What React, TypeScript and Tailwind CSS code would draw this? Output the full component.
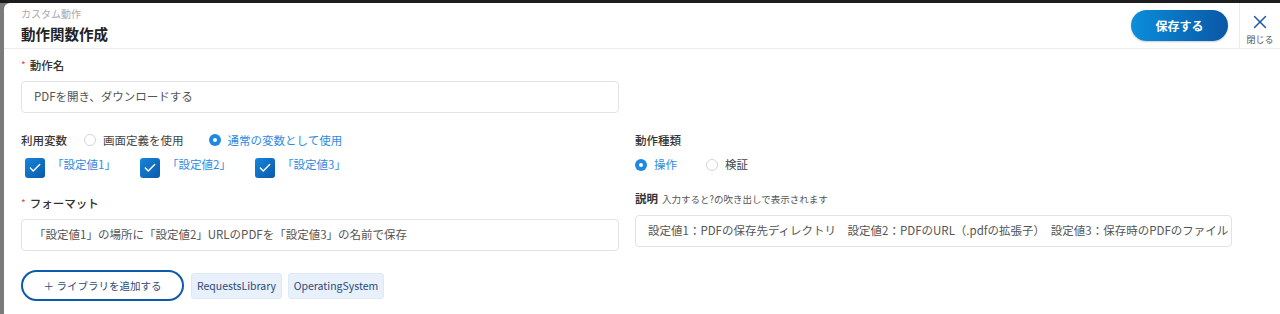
import { X, Check } from 'lucide-react';

const font = { fontFamily: '"Noto Sans CJK JP", "Noto Sans", sans-serif' };

function Radio({ label, checked }: { label: string; checked?: boolean }) {
  return (
    <label className="flex items-center gap-[7px]">
      {checked ? (
        <span className="flex h-[12px] w-[12px] items-center justify-center rounded-full bg-[#1e88e5]">
          <span className="h-[4px] w-[4px] rounded-full bg-white" />
        </span>
      ) : (
        <span className="h-[12px] w-[12px] rounded-full border border-[#d4d4dc] bg-white" />
      )}
      <span className={checked ? 'text-[#2f8ae2]' : 'text-[#444]'}>{label}</span>
    </label>
  );
}

function CheckItem({ label }: { label: string }) {
  return (
    <div className="flex w-[115px] items-center gap-[7px]">
      <span className="flex h-[20px] w-[20px] items-center justify-center rounded-[3px] bg-gradient-to-br from-[#1686dc] to-[#0a5aa9]">
        <Check size={14} strokeWidth={2.5} className="text-white" />
      </span>
      <span className="-mt-[6px] text-[#2f8ae2]">{label}</span>
    </div>
  );
}

function Label({ text, required }: { text: string; required?: boolean }) {
  return (
    <div className="flex h-[16px] items-center text-[11.5px] leading-[16px] text-[#333]">
      {required ? <span className="mr-[4px] text-[10px] text-[#e04848]">*</span> : null}
      <span className="font-medium">{text}</span>
    </div>
  );
}

function Field({ value }: { value: string }) {
  return (
    <div className="flex h-[32px] items-center overflow-hidden whitespace-nowrap rounded-[4px] border border-[#e2e2ea] bg-white px-[12px] text-[11.5px] text-[#555]">
      {value}
    </div>
  );
}

export default function App() {
  return (
    <div className="h-[314px] w-[1280px] overflow-hidden border-t-[3px] border-[#1d1d1f] bg-[#7a7a7a]" style={font}>
      <div className="ml-[4px] h-[311px] rounded-tl-[6px] bg-white">
        <header className="flex h-[46px] border-b border-[#ebebf1]">
          <div className="flex-1 pl-[17px] pt-[5px]">
            <p className="text-[10px] leading-[12px] text-[#a8a8b0]">カスタム動作</p>
            <h1 className="mt-[4px] text-[14.5px] font-bold leading-[20px] text-[#222]">動作関数作成</h1>
          </div>
          <div className="flex items-center pr-[11px]">
            <button
              type="button"
              className="h-[31px] w-[97px] rounded-full bg-gradient-to-r from-[#0c8edb] to-[#0a57a6] text-[12px] font-bold text-white shadow-[0_1px_2px_rgba(0,0,0,0.2)]"
            >
              保存する
            </button>
          </div>
          <div className="flex w-[41px] flex-col items-center border-l border-[#ebebf1] pt-[8px]">
            <X size={22} strokeWidth={1.6} className="text-[#1b5aa5]" />
            <span className="mt-[2px] text-[9px] leading-[10px] text-[#555]">閉じる</span>
          </div>
        </header>

        <div className="pl-[17px] pt-[8px] text-[11.5px]">
          <div className="w-[598px]">
            <Label text="動作名" required />
            <div className="mt-[8px]">
              <Field value="PDFを開き、ダウンロードする" />
            </div>
          </div>

          <div className="mt-[19px] flex gap-[16px]">
            <div className="w-[598px]">
              <div className="flex h-[16px] items-center leading-[16px]">
                <span className="mr-[17px] font-medium text-[#333]">利用変数</span>
                <div className="flex items-center gap-[25px]">
                  <Radio label="画面定義を使用" />
                  <Radio label="通常の変数として使用" checked />
                </div>
              </div>
              <div className="ml-[4px] mt-[9px] flex h-[22px] items-center">
                <CheckItem label="「設定値1」" />
                <CheckItem label="「設定値2」" />
                <CheckItem label="「設定値3」" />
              </div>
              <div className="mt-[16px]">
                <Label text="フォーマット" required />
              </div>
              <div className="mt-[8px]">
                <Field value="「設定値1」の場所に「設定値2」URLのPDFを「設定値3」の名前で保存" />
              </div>
              <div className="mt-[19px] flex items-center gap-[6px]">
                <button
                  type="button"
                  className="mr-[1px] h-[31px] w-[163px] rounded-full border-2 border-[#0c5aab] text-[10.5px] text-[#2d4b78]"
                >
                  ＋ ライブラリを追加する
                </button>
                <span className="flex h-[26px] w-[91px] items-center justify-center rounded-[3px] border border-[#dde9f7] bg-[#e7f0fb] text-[10.5px] text-[#2d4b78]">
                  RequestsLibrary
                </span>
                <span className="flex h-[26px] w-[96px] items-center justify-center rounded-[3px] border border-[#dde9f7] bg-[#e7f0fb] text-[10.5px] text-[#2d4b78]">
                  OperatingSystem
                </span>
              </div>
            </div>

            <div className="w-[597px]">
              <Label text="動作種類" />
              <div className="mt-[9px] flex h-[16px] items-center gap-[29px]">
                <Radio label="操作" checked />
                <Radio label="検証" />
              </div>
              <div className="mt-[18px] flex h-[16px] items-center gap-[4px]">
                <span className="font-bold text-[#333]">説明</span>
                <span className="text-[9.5px] text-[#555]">入力すると?の吹き出しで表示されます</span>
              </div>
              <div className="mt-[8px]">
                <Field value="設定値1：PDFの保存先ディレクトリ　設定値2：PDFのURL（.pdfの拡張子）　設定値3：保存時のPDFのファイル" />
              </div>
            </div>
          </div>
        </div>
      </div>
    </div>
  );
}
